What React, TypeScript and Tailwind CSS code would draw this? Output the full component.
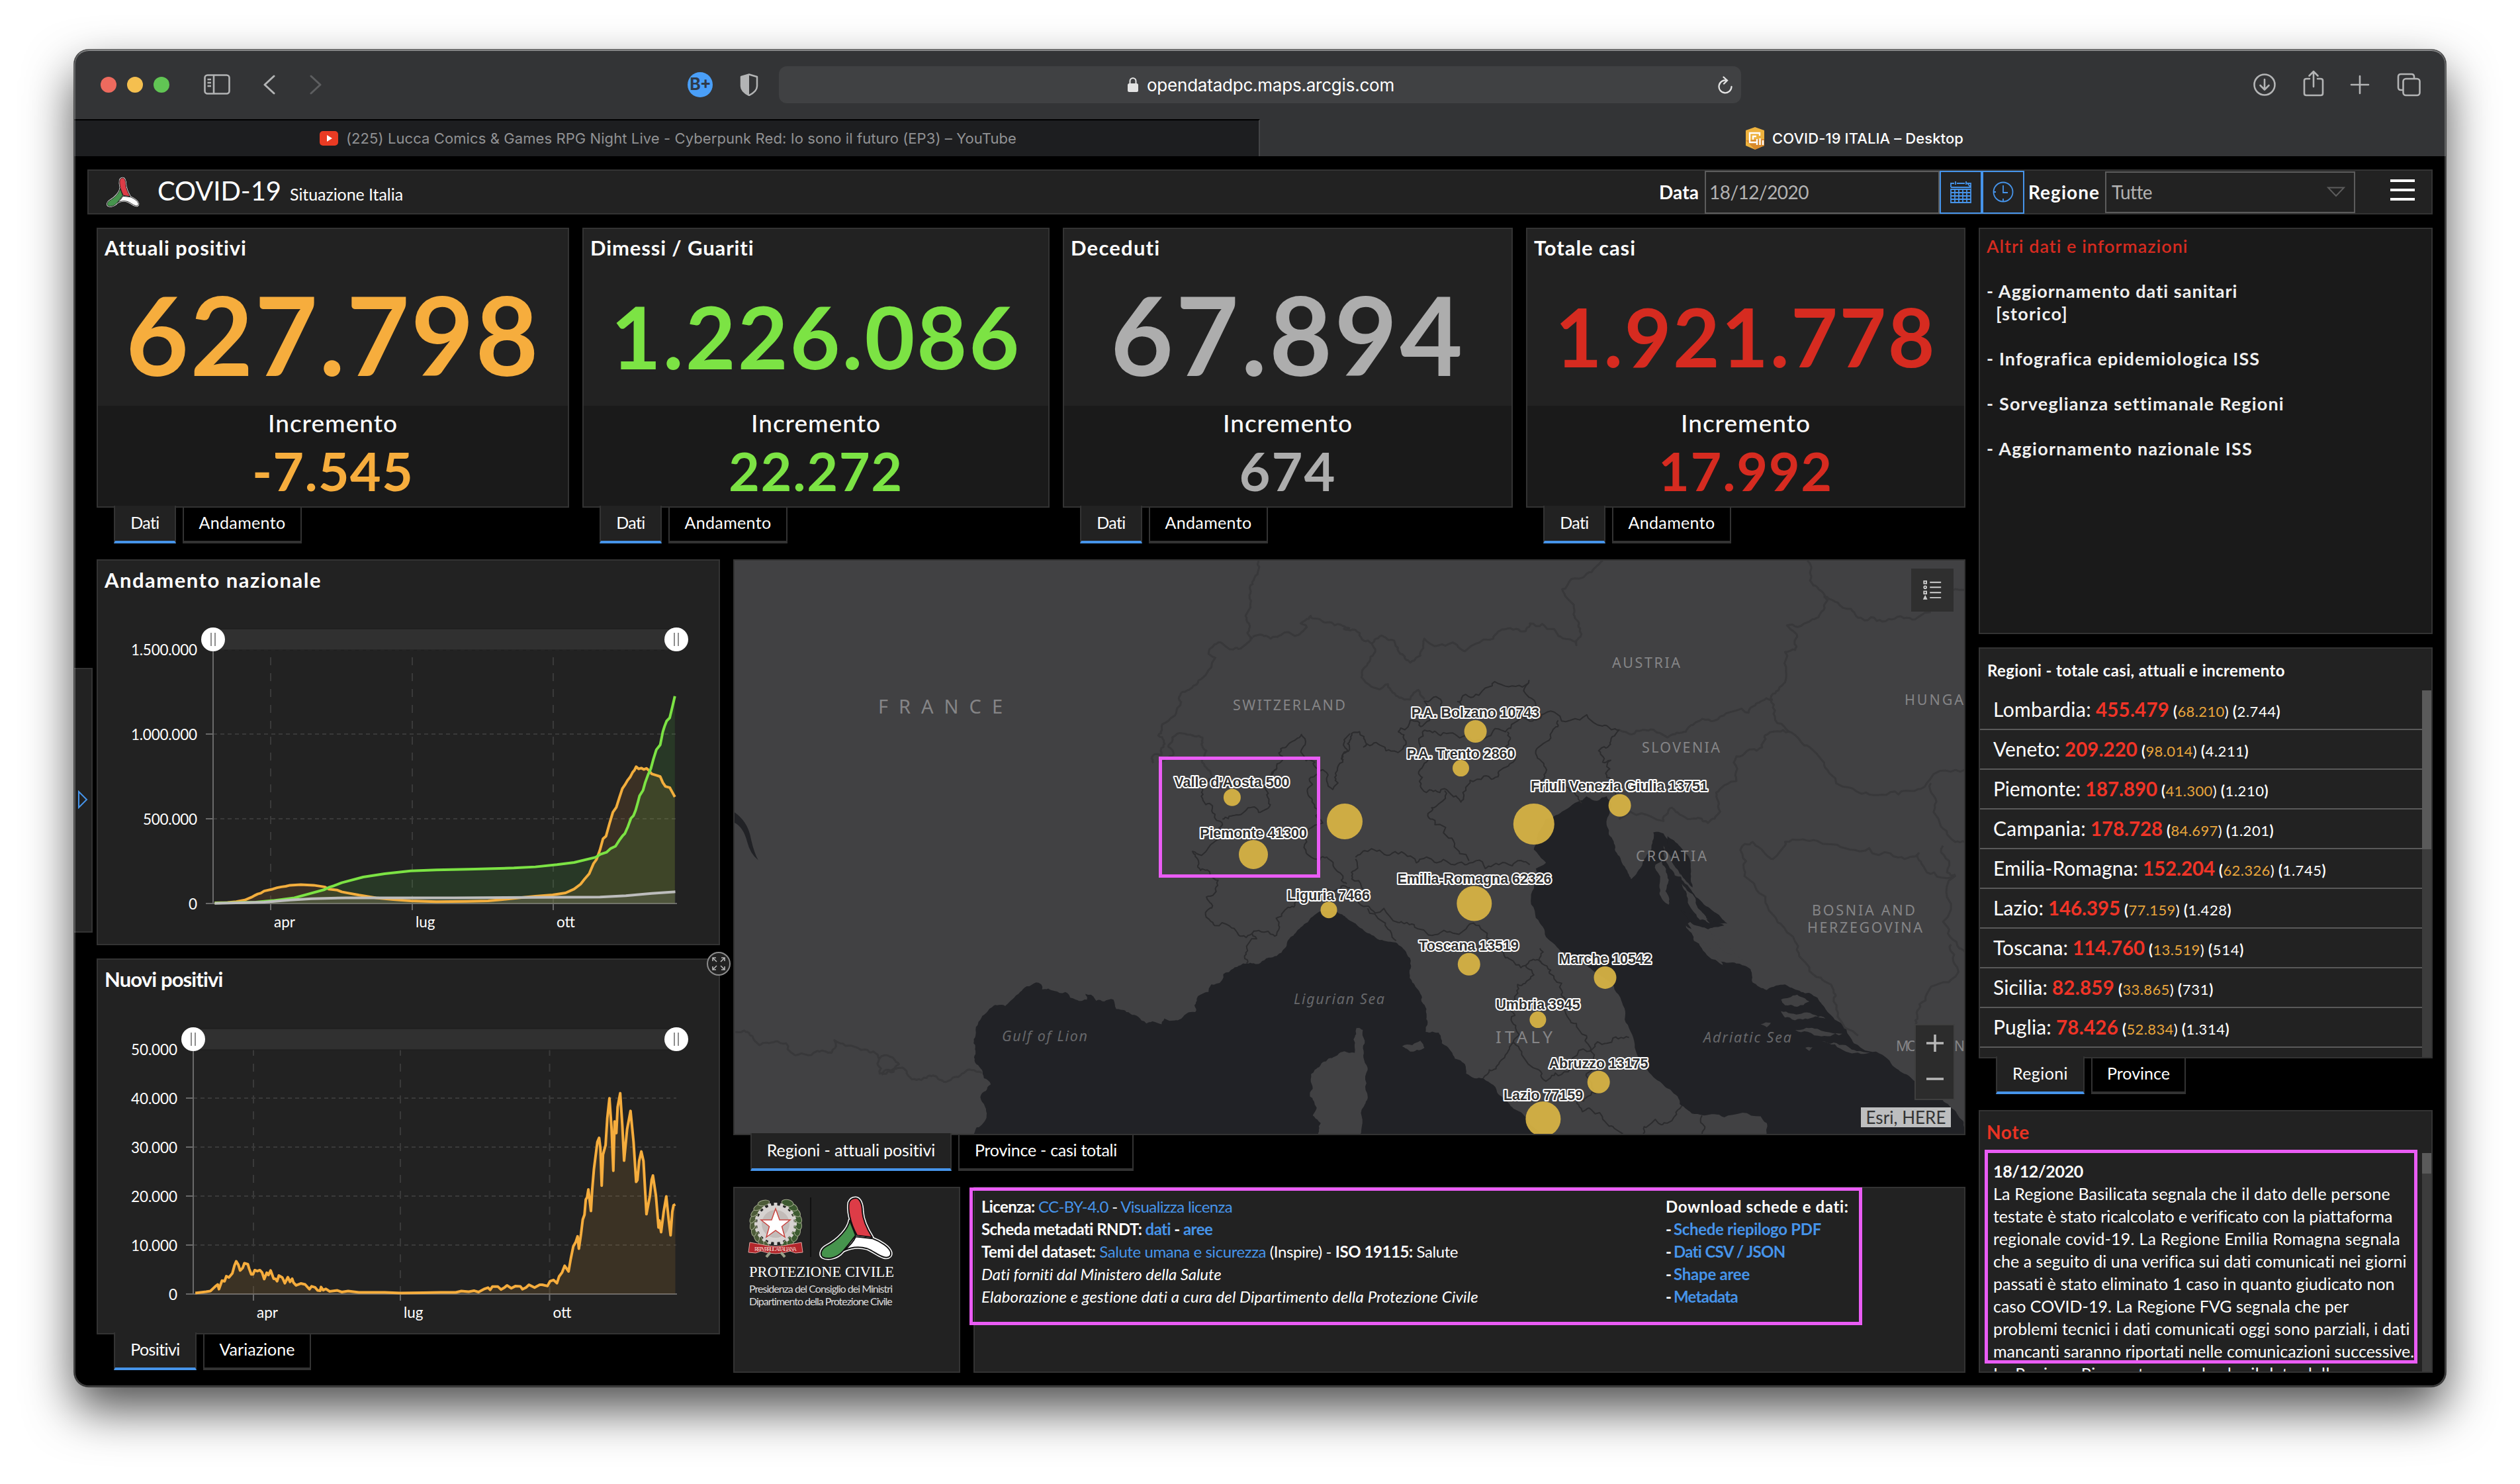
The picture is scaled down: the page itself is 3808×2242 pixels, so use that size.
import { useLayoutEffect, useRef, useState } from "react";
import type { ReactNode } from "react";

/* ---------- text that is tracked to fill a given width ---------- */
function Fit({ w, className = "", children }: { w: number; className?: string; children: ReactNode }) {
  const ref = useRef<HTMLSpanElement>(null);
  const [spacing, setSpacing] = useState(0);
  useLayoutEffect(() => {
    const el = ref.current;
    if (!el) return;
    el.style.letterSpacing = "0px";
    const natural = el.getBoundingClientRect().width;
    const count = Math.max(1, (el.textContent || "").length);
    const next = (w - natural) / count;
    el.style.letterSpacing = next + "px";
    setSpacing(next);
  }, [w]);
  return (
    <span ref={ref} className={"inline-block whitespace-pre " + className} style={{ letterSpacing: spacing }}>
      {children}
    </span>
  );
}

/* ---------- bottom tabs ---------- */
function Tabs({ items }: { items: { label: string; text: number; box: string }[] }) {
  return (
    <div className="relative z-10 -mt-[3px] ml-[26px] flex h-[57px] gap-[10px]">
      {items.map((t, i) => (
        <div
          key={t.label}
          className={
            "flex justify-center border-x-2 border-[#333] text-[25px] leading-[34px] " +
            t.box +
            (i === 0 ? " border-b-4 border-b-[#4694ea] bg-[#222] pt-[8px]" : " mt-[3px] border-b-4 bg-black pt-[5px]")
          }
        >
          <Fit w={t.text}>{t.label}</Fit>
        </div>
      ))}
    </div>
  );
}

/* ---------- logos ---------- */
function CivilProtection({ className }: { className: string }) {
  const red = "M55 3C61 3 65 12 65 24C66 38 72 50 80 63L57 60C46 40 43 20 45 10C47 5 51 3 55 3Z";
  const green = "M46 37C44 50 30 66 10 77C2 82 1 90 5 93C12 97 24 95 32 88C42 78 50 66 55 60Z";
  const white = "M55 62L81 65C92 69 106 78 108 86C109 93 103 95 97 93C88 90 82 84 72 80C62 77 50 77 37 83C46 76 52 69 55 62Z";
  return (
    <svg viewBox="-2 -1 114 99" className={className} preserveAspectRatio="none">
      <g stroke="#fff" strokeWidth="5" fill="#fff" strokeLinejoin="round">
        <path d={red} /><path d={green} /><path d={white} />
      </g>
      <g stroke="#111" strokeWidth="2" strokeLinejoin="round">
        <path d={white} fill="#fff" /><path d={green} fill="#46944d" /><path d={red} fill="#dd3c47" />
      </g>
    </svg>
  );
}

function Emblem() {
  const teeth = Array.from({ length: 20 }, (_, i) => i * 18);
  const leaves = Array.from({ length: 9 }, (_, i) => i);
  return (
    <svg viewBox="0 0 84 94" className="h-[94px] w-[84px]">
      {leaves.map((i) => {
        const a = ((118 + i * 15) * Math.PI) / 180;
        const x = 42 + Math.cos(a) * 34;
        const y = 42 + Math.sin(a) * 36;
        const deg = 118 + i * 15 + 90;
        return (
          <g key={i} stroke="#a3ab8e" strokeWidth="1">
            <ellipse cx={x} cy={y} rx="9" ry="4" fill="#4c5b38" transform={`rotate(${deg + 20} ${x} ${y})`} />
            <ellipse cx={84 - x} cy={y} rx="9" ry="5" fill="#3c5a30" transform={`rotate(${-deg - 20} ${84 - x} ${y})`} />
          </g>
        );
      })}
      <g fill="#d6d2d0">
        {teeth.map((t) => (
          <rect key={t} x="39.5" y="11" width="5" height="8" transform={`rotate(${t} 42 43)`} />
        ))}
        <circle cx="42" cy="43" r="28" />
      </g>
      <circle cx="42" cy="43" r="21" fill="#c2bbb8" />
      <path d="M42 20L48 37L64 37L51.500 47L56 63L42 53L28 63L32.500 47L20 37L36 37Z" fill="#fff" stroke="#c8443f" strokeWidth="1.500" />
      <path d="M3 71L20 74Q42 80 64 74L81 71L83 86L72 87L64 84Q42 92 20 84L12 87L1 86Z" fill="#b3262b" stroke="#e4a6a2" strokeWidth="1" />
      <path d="M34 86L28 93M50 86L56 93" stroke="#9aa08a" strokeWidth="4" />
      <text x="42" y="83.500" fontSize="8.500" fill="#f3d9d4" textAnchor="middle" textLength="64" className="font-[Liberation_Serif]">REPVBBLICA ITALIANA</text>
    </svg>
  );
}

/* ---------- browser chrome ---------- */
function TitleBar() {
  return (
    <div className="flex h-[105px] w-full shrink-0 items-center bg-[#333436] text-[#b3b4b5]">
      <div className="ml-[40px] flex gap-[16px]">
        <div className="size-[24px] rounded-full bg-[#ed6a5e]" />
        <div className="size-[24px] rounded-full bg-[#f5bf4f]" />
        <div className="size-[24px] rounded-full bg-[#61c554]" />
      </div>
      <svg viewBox="0 0 40 32" className="ml-[52px] h-[32px] w-[40px]" fill="none" stroke="currentColor" strokeWidth="2.600">
        <rect x="1.500" y="1.500" width="37" height="28" rx="4" />
        <path d="M15 2V30M5.500 8H11M5.500 13H11M5.500 18H11" />
      </svg>
      <svg viewBox="0 0 18 30" className="ml-[50px] h-[30px] w-[18px]" fill="none" stroke="currentColor" strokeWidth="3" strokeLinecap="round" strokeLinejoin="round">
        <path d="M16 2L2 15L16 28" />
      </svg>
      <svg viewBox="0 0 18 30" className="ml-[52px] h-[30px] w-[18px] text-[#5d5e60]" fill="none" stroke="currentColor" strokeWidth="3" strokeLinecap="round" strokeLinejoin="round">
        <path d="M2 2L16 15L2 28" />
      </svg>
      <div className="ml-[553px] flex size-[38px] items-center justify-center rounded-full bg-[#4a9ff8] font-[Inter] text-[25px] font-bold leading-none tracking-[-1px] text-[#2f3a48]">B<span className="-mt-[4px]">+</span></div>
      <svg viewBox="0 0 28 34" className="ml-[41px] h-[34px] w-[28px]">
        <path d="M14 1.500L26 5V19C26 26 20 30 14 33C8 30 2 26 2 19V5Z" fill="none" stroke="currentColor" strokeWidth="2.500" strokeLinejoin="round" />
        <path d="M14 1.500V33C8 30 2 26 2 19V5Z" fill="currentColor" />
      </svg>
      <div className="ml-[31px] flex h-[56px] w-[1454px] items-center rounded-[12px] bg-[#404143] font-[Inter] text-[26px] text-white">
        <svg viewBox="0 0 18 24" className="ml-[526px] h-[24px] w-[18px]">
          <rect x="1" y="10" width="16" height="13" rx="2.500" fill="#e3e3e3" />
          <path d="M4.500 11V6.500A4.500 4.500 0 0 1 13.500 6.500V11" fill="none" stroke="#e3e3e3" strokeWidth="2" />
        </svg>
        <div className="ml-[12px] mt-[2px] w-[862px]"><Fit w={374}>opendatadpc.maps.arcgis.com</Fit></div>
        <svg viewBox="0 0 24 28" className="mt-[2px] h-[28px] w-[24px]" fill="none" stroke="#e3e3e3" strokeWidth="2.300" strokeLinecap="round">
          <path d="M14 6.500A9.500 9.500 0 1 0 21.500 16M9.500 1.500L15 6.500L10 11.500" />
        </svg>
      </div>
      <svg viewBox="0 0 36 36" className="ml-[773px] size-[36px]" fill="none" stroke="currentColor" strokeWidth="2.600" strokeLinecap="round" strokeLinejoin="round">
        <circle cx="18" cy="18" r="15.500" />
        <path d="M18 10V25M11.500 19L18 25.500L24.500 19" />
      </svg>
      <svg viewBox="0 0 32 40" className="-mt-[4px] ml-[40px] h-[40px] w-[32px]" fill="none" stroke="currentColor" strokeWidth="2.600" strokeLinecap="round" strokeLinejoin="round">
        <path d="M10 13H5Q2 13 2 16V35Q2 38 5 38H27Q30 38 30 35V16Q30 13 27 13H22M16 25V3M9.500 8.500L16 2L22.500 8.500" />
      </svg>
      <svg viewBox="0 0 30 30" className="ml-[39px] size-[30px]" fill="none" stroke="currentColor" strokeWidth="2.600" strokeLinecap="round">
        <path d="M15 2V28M2 15H28" />
      </svg>
      <svg viewBox="0 0 36 36" className="ml-[41px] size-[36px]" fill="none" stroke="currentColor" strokeWidth="2.600">
        <rect x="9.500" y="9" width="25" height="25" rx="4" />
        <path d="M9 26H6Q2 26 2 22V6Q2 2 6 2H22Q26 2 26 6V8.500" />
      </svg>
    </div>
  );
}

function TabBar() {
  return (
    <div className="flex h-[56px] w-full shrink-0 bg-[#333436] font-[Inter] text-[22px] leading-[56px]">
      <div className="flex w-[1792px] items-center border-r-2 border-t-2 border-r-[#434446] border-t-black bg-[#1d1e20] text-[#919294]">
        <svg viewBox="0 0 28 22" className="ml-[371px] h-[22px] w-[28px]">
          <rect width="28" height="22" rx="5" fill="#ea3b23" />
          <path d="M11 6L19 11L11 16Z" fill="#fff" />
        </svg>
        <Fit w={1013} className="ml-[12px]">(225) Lucca Comics &amp; Games RPG Night Live - Cyberpunk Red: Io sono il futuro (EP3) – YouTube</Fit>
      </div>
      <div className="flex items-center pt-[2px] font-medium text-white">
        <svg viewBox="0 0 30 34" className="ml-[733px] h-[34px] w-[30px]">
          <path d="M15 0L29 5V28L15 34L1 28V5Z" fill="#eeb23e" />
          <path d="M1 20L15 34L29 28V18Z" fill="#d98a2c" />
          <path d="M18 23H7V9H22V13M12 19V14H17M18 27V18M22.500 27V17M27 27V20" fill="none" stroke="#fff" strokeWidth="2.400" />
        </svg>
        <Fit w={289} className="ml-[11px]">COVID-19 ITALIA – Desktop</Fit>
      </div>
    </div>
  );
}

function Header() {
  return (
    <div className="flex h-[68px] w-[3544px] items-center border-2 border-[#333] bg-[#222]">
      <CivilProtection className="ml-[26px] h-[46px] w-[51px]" />
      <div className="ml-[27px] flex items-baseline leading-[60px]">
        <Fit w={187} className="text-[40px]">COVID-19</Fit>
        <Fit w={171} className="ml-[13px] text-[25px]">Situazione Italia</Fit>
      </div>
      <Fit w={60} className="ml-[1898px] text-[28px] font-bold">Data</Fit>
      <div className="ml-[9px] flex h-[65px] w-[355px] items-center border-2 border-[#5c5c5c] text-[28px] text-[#b2b2b2]">
        <Fit w={150} className="ml-[5px]">18/12/2020</Fit>
      </div>
      <div className="flex h-[65px] w-[64px] items-center justify-center border-2 border-[#4694ea]">
        <svg viewBox="0 0 34 34" className="size-[34px]" fill="none" stroke="#4694ea" strokeWidth="1.800">
          <path d="M2 10V4H7M11 4H23M27 4H32V10ZM9 1V6M25 1V6M2 10H32M2 13H32V33H2ZM2 18H32M2 23H32M2 28H32M8 13V33M14 13V33M20 13V33M26 13V33" />
        </svg>
      </div>
      <div className="flex h-[65px] w-[64px] items-center justify-center border-2 border-[#4694ea]">
        <svg viewBox="0 0 32 32" className="size-[32px]" fill="none" stroke="#4694ea" strokeWidth="1.800">
          <circle cx="16" cy="16" r="14.500" />
          <path d="M16 6V17H23M16 26V30M2 16H5" />
        </svg>
      </div>
      <Fit w={108} className="ml-[6px] text-[28px] font-bold">Regione</Fit>
      <div className="ml-[8px] flex h-[63px] w-[378px] items-center border-2 border-[#5c5c5c] text-[28px] text-[#b2b2b2]">
        <Fit w={60} className="ml-[8px]">Tutte</Fit>
        <svg viewBox="0 0 28 16" className="ml-[264px] h-[16px] w-[28px]" fill="none" stroke="#5c5c5c" strokeWidth="2">
          <path d="M2 1.500H26L14 14Z" />
        </svg>
      </div>
      <div className="-mt-[6px] ml-[53px] flex w-[37px] flex-col gap-[10px]">
        <div className="h-[4px] bg-white" />
        <div className="h-[4px] bg-white" />
        <div className="h-[4px] bg-white" />
      </div>
    </div>
  );
}

/* ---------- KPI cards ---------- */
type Kpi = { title: string; tw: number; value: string; vw: number; size: string; inc: string; iw: number; color: string; box: string };
const kpis: Kpi[] = [
  { title: "Attuali positivi", tw: 214, value: "627.798", vw: 626, size: "text-[164px] mt-[11px]", inc: "-7.545", iw: 244, color: "text-[#f6ad3d]", box: "w-[714px]" },
  { title: "Dimessi / Guariti", tw: 248, value: "1.226.086", vw: 620, size: "text-[131px] mt-[14px]", inc: "22.272", iw: 264, color: "text-[#7ce344]", box: "w-[706px]" },
  { title: "Deceduti", tw: 136, value: "67.894", vw: 536, size: "text-[164px] mt-[11px]", inc: "674", iw: 147, color: "text-[#adadad]", box: "w-[680px]" },
  { title: "Totale casi", tw: 154, value: "1.921.778", vw: 576, size: "text-[122px] mt-[14px]", inc: "17.992", iw: 264, color: "text-[#d62b20]", box: "w-[664px]" },
];

function KpiCard({ k }: { k: Kpi }) {
  return (
    <div className={k.box}>
      <div className="flex h-[423px] flex-col border-2 border-[#333] bg-[#222]">
        <div className="h-[267px] pt-[8px]">
          <div className="pl-[10px] text-[31px] font-bold leading-[40px]"><Fit w={k.tw}>{k.title}</Fit></div>
          <div className={"text-center font-bold leading-[200px] " + k.size + " " + k.color}><Fit w={k.vw}>{k.value}</Fit></div>
        </div>
        <div className="grow bg-[#1a1a1a] pt-[1px] text-center">
          <div className="text-[37px] font-medium leading-[50px]"><Fit w={196}>Incremento</Fit></div>
          <div className={"mt-[2px] text-[81px] font-bold leading-[90px] " + k.color}><Fit w={k.iw}>{k.inc}</Fit></div>
        </div>
      </div>
      <Tabs items={[{ label: "Dati", text: 44, box: "w-[94px]" }, { label: "Andamento", text: 131, box: "w-[180px]" }]} />
    </div>
  );
}

/* ---------- charts ---------- */
type Axis = { y: number; label: string };
type Series = { d: string; base: string; color: string; fill: string };
function Chart(p: { title: string; tw: number; top: number; h: number; x0: number; x1: number; slider: number; axis: Axis[]; months: { x: number; label: string }[]; transform: string; series: Series[] }) {
  const zero = p.axis[p.axis.length - 1].y;
  const top = p.axis[0].y;
  return (
    <div className="relative w-full border-2 border-[#333] bg-[#222]">
      <svg viewBox={`148 ${p.top + 2} 938 ${p.h - 4}`} className="block w-full" fill="none">
        <g stroke="#3a3a3a" strokeWidth="2">
          {p.axis.slice(0, -1).map((a) => <path key={a.y} d={`M${p.x0} ${a.y}H${p.x1}`} strokeDasharray="6 5" />)}
          {p.months.map((m) => <path key={m.x} d={`M${m.x} ${zero}V${top}`} strokeDasharray="12 12" />)}
        </g>
        <rect x={p.x0} y={p.slider - 16} width={p.x1 - p.x0} height="32" fill="#303030" stroke="#1b1b1b" strokeWidth="1" />
        <g stroke="#6a6a6a" strokeWidth="2">
          {p.axis.slice(1).map((a) => <path key={a.y} d={`M${p.x0 - 11} ${a.y}H${p.x0}`} />)}
          {p.months.map((m) => <path key={m.x} d={`M${m.x} ${zero}V${zero + 10}`} />)}
          <path d={`M${p.x0} ${top}V${zero}H${p.x1 + 1}`} />
        </g>
        <g transform={p.transform} strokeLinejoin="round">
          {p.series.map((s) => <path key={s.color + "f"} d={s.d + s.base} fill={s.fill} />)}
          {p.series.map((s) => <path key={s.color} d={s.d} stroke={s.color} strokeWidth="4" vectorEffect="non-scaling-stroke" />)}
        </g>
        {[p.x0, p.x1].map((x) => (
          <g key={x}>
            <circle cx={x} cy={p.slider} r="18" fill="#fff" />
            <path d={`M${x - 3} ${p.slider - 10}V${p.slider + 10}M${x + 3} ${p.slider - 10}V${p.slider + 10}`} stroke="#8d8d8d" strokeWidth="2" />
          </g>
        ))}
        <g fill="#fff" fontSize="22.500" className="font-[Lato]">
          {p.axis.map((a) => (
            <text key={a.y} x={p.x0 - 24} y={a.y + 8.500} textAnchor="end" textLength={a.label.length === 1 ? undefined : a.label.length === 6 ? 70 : a.label.length === 7 ? 82 : 100}>{a.label}</text>
          ))}
          {p.months.map((m) => <text key={m.x} x={m.x + 5} y={zero + 36}>{m.label}</text>)}
        </g>
      </svg>
      <div className="absolute left-[10px] top-[9px] text-[31px] font-bold leading-[40px]"><Fit w={p.tw}>{p.title}</Fit></div>
    </div>
  );
}

const orange1 = "M345 1288L375 1287L395 1284L415 1278L430 1268L437 1262L445 1256L452 1253L460 1245L480 1238L490 1233L500 1230L510 1228L520 1224L545 1222L575 1224L600 1230L610 1238L630 1242L640 1248L650 1251L680 1260L720 1270L760 1276L800 1281L860 1284L930 1283L980 1281L1010 1277L1050 1270L1090 1264L1130 1259L1160 1252L1180 1238L1195 1220L1204 1202L1215 1182L1225 1145L1232 1130L1240 1095L1247 1055L1254 1045L1262 1000L1270 958L1278 940L1285 905L1292 872L1298 858L1304 842L1310 830L1316 812L1320 805L1324 792L1330 800L1336 797L1342 802L1348 798L1354 806L1360 818L1370 823L1380 828L1386 850L1392 864L1402 868L1408 885L1414 902";
const green1 = "M345 1289L440 1286L480 1280L530 1270L560 1257L600 1240L610 1232L622 1226L640 1215L690 1194L740 1182L800 1172L860 1168L950 1165L1040 1161L1090 1157L1140 1149L1180 1141L1230 1122L1240 1112L1255 1104L1265 1090L1276 1082L1285 1060L1292 1045L1298 1035L1305 1010L1312 980L1318 970L1323 950L1328 922L1332 898L1340 878L1345 850L1352 820L1358 800L1364 765L1371 730L1380 712L1386 665L1390 645L1395 625L1402 614L1408 575L1414 535";
const gray1 = "M345 1290L460 1286L520 1278L570 1273L650 1270L900 1270L1240 1267L1300 1262L1360 1254L1415 1248";
const orange2 = "M300 1157L325 1153L335 1151L345 1138L352 1130L355 1145L362 1118L368 1120L372 1104L378 1108L386 1095L391 1070L395 1057L400 1068L404 1086L410 1078L414 1063L422 1066L425 1080L430 1098L434 1098L438 1085L444 1088L450 1085L455 1092L460 1113L466 1093L470 1100L475 1086L482 1112L486 1112L490 1120L494 1102L502 1108L508 1126L515 1107L520 1122L525 1112L528 1124L534 1133L545 1127L555 1130L565 1145L570 1136L578 1139L584 1149L590 1150L592 1138L597 1148L603 1144L612 1152L630 1149L640 1154L655 1151L680 1155L700 1155L740 1155L776 1157L830 1156L870 1155L905 1155L918 1151L935 1153L948 1150L958 1154L970 1145L980 1140L985 1147L990 1137L1003 1137L1010 1146L1018 1140L1024 1133L1034 1142L1044 1135L1055 1136L1060 1145L1068 1140L1075 1131L1088 1140L1100 1131L1106 1131L1118 1135L1124 1120L1132 1116L1140 1126L1145 1105L1152 1092L1158 1071L1167 1089L1172 1050L1178 1010L1184 995L1188 978L1191 1017L1196 970L1200 925L1204 910L1207 862L1210 855L1213 830L1219 898L1222 830L1226 765L1234 680L1238 667L1241 700L1244 818L1247 720L1253 690L1257 605L1262 542L1267 640L1271 771L1274 615L1278 652L1281 570L1287 526L1292 630L1296 739L1303 640L1311 582L1318 680L1324 806L1327 800L1331 740L1336 710L1341 740L1348 908L1356 850L1360 800L1363 786L1370 850L1376 950L1378 928L1382 965L1388 900L1394 852L1400 930L1404 975L1408 900L1411 880L1415 877";

/* ---------- map ---------- */
function rough(src: string, amp: number, closed = false) {
  const nums = src.trim().split(/[\s,]+/).map(Number);
  let pts: number[][] = [];
  for (let i = 0; i < nums.length; i += 2) pts.push([nums[i], nums[i + 1]]);
  if (closed) pts.push(pts[0]);
  let seed = Math.abs(Math.round(nums[0] * 31 + nums[1] * 17)) + 7;
  const rnd = () => {
    seed = (seed * 16807) % 2147483647;
    return seed / 2147483647 - 0.5;
  };
  for (let pass = 0; pass < 3; pass++) {
    const out: number[][] = [pts[0]];
    for (let i = 1; i < pts.length; i++) {
      const [ax, ay] = pts[i - 1];
      const [bx, by] = pts[i];
      const len = Math.hypot(bx - ax, by - ay);
      if (len > 8 && len < 160) out.push([(ax + bx) / 2 - ((by - ay) / len) * rnd() * len * amp, (ay + by) / 2 + ((bx - ax) / len) * rnd() * len * amp]);
      out.push([bx, by]);
    }
    pts = out;
  }
  return "M" + pts.map((p) => p[0].toFixed(1) + " " + p[1].toFixed(1)).join("L") + (closed ? "Z" : "");
}

const seaWest = "622 1545 655 1508 662 1485 655 1460 648 1435 660 1425 672 1408 655 1392 650 1370 636 1355 634 1320 634 1280 640 1250 655 1225 675 1205 692 1199 708 1202 725 1185 745 1165 762 1150 785 1140 798 1145 800 1158 830 1162 858 1165 870 1180 900 1188 912 1185 908 1170 922 1172 935 1188 955 1190 978 1185 985 1210 1010 1218 1030 1225 1048 1240 1060 1248 1075 1242 1098 1250 1105 1235 1130 1240 1160 1222 1182 1218 1180 1200 1195 1172 1215 1165 1222 1145 1248 1135 1252 1118 1280 1100 1310 1090 1345 1088 1385 1070 1405 1050 1420 1020 1445 995 1470 970 1500 952 1530 952 1556 966 1556 1320 1530 1335 1500 1350 1480 1370 1470 1395 1475 1420 1468 1440 1485 1470 1475 1490 1495 1510 1490 1545";
const seaTyrrhenian = "0 965 30 985 60 1010 100 1030 130 1035 155 1060 165 1090 170 1140 190 1170 205 1210 208 1245 203 1270 235 1272 243 1300 265 1320 275 1340 300 1355 303 1380 345 1392 375 1415 395 1445 425 1475 450 1495 480 1530 485 1545 40 1545 45 1475 60 1440 60 1370 50 1320 48 1265 32 1260 25 1290 28 1325 0 1320";
const seaAdriatic = "590 660 600 650 625 662 650 650 662 672 655 700 650 712 655 750 670 790 690 830 710 868 725 850 740 820 760 790 765 745 790 748 805 765 812 800 830 830 835 870 870 925 885 970 850 985 880 1030 930 1085 970 1090 1005 1105 1010 1140 1045 1160 1090 1145 1130 1165 1170 1180 1190 1210 1240 1260 1260 1300 1330 1330 1370 1370 1410 1400 1470 1440 1500 1470 1530 1505 1540 1545 1045 1545 1045 1510 1030 1492 940 1495 890 1490 860 1485 830 1460 825 1440 790 1410 750 1370 725 1330 705 1260 690 1200 665 1145 640 1125 600 1095 540 1060 500 1020 475 970 466 900 475 840 500 825 470 790 480 750 500 710 540 690";
const inlets = ["800 755 825 775 855 815 858 860 862 890 830 850 812 810", "835 870 870 915 910 950 948 985 920 985 880 955 850 915", "830 950 860 960 905 975 940 990 900 1000 860 985"];
const islands9 = [
  "770 830 785 820 800 860 795 900 803 935 790 925 780 890",
  "790 780 815 830 835 862 818 858 798 825",
  "835 880 870 925 890 960 905 985 880 975 850 930",
  "845 990 880 1020 925 1080 940 1100 905 1075 865 1030",
  "900 1000 950 1040 1000 1090 985 1095 930 1050",
  "1080 1185 1120 1172 1150 1190 1120 1204 1090 1200",
  "1080 1215 1130 1222 1190 1235 1140 1235 1090 1232",
  "1115 1265 1170 1262 1240 1275 1180 1282",
  "1180 1295 1240 1305 1300 1325 1240 1322",
  "1030 1250 1055 1246 1045 1258",
  "1140 1312 1158 1310 1150 1320",
  "145 1308 170 1305 190 1293 200 1312 165 1322",
];
const countries8 = [
  "1340 30 1338 60 1318 100 1320 140 1310 180 1312 220 1325 235",
  "1325 230 1370 235 1400 222 1440 225 1460 205 1445 195 1470 175 1500 190 1530 200 1568 208",
  "1320 232 1290 262 1250 248 1230 250 1215 275 1232 285 1190 345 1150 375 1145 410 1100 460 1090 490 1103 520 1098 540 1075 545 1078 562",
  "1090 560 1110 550 1128 540 1115 520 1125 495 1165 488 1200 495 1210 530 1205 570 1225 600",
  "35 1270 65 1270 95 1305 135 1295 175 1325 240 1320 275 1325 282 1292 340 1312 390 1330 395 1380 440 1365 475 1395 520 1385 560 1402 600 1380 650 1378",
  "395 1340 420 1335 443 1355 430 1375 400 1382",
];
const regions8 = [
  "1225 600 1205 615 1200 655 1225 675 1230 705 1250 725 1260 760 1215 785 1175 795 1190 820 1195 845 1225 860 1238 885 1210 915 1212 950 1230 990 1290 1015 1328 1005 1335 1025 1305 1070 1310 1090",
  "1250 710 1280 700 1310 685 1340 692 1365 680 1362 650 1365 615 1385 580",
  "1365 600 1385 570 1400 545 1395 525 1425 505 1447 487 1450 540 1480 560 1500 580 1510 610 1525 632 1538 615 1530 600 1550 560 1562 530 1568 485",
  "1500 580 1470 600 1462 640 1480 680 1500 720 1460 770 1480 815 1510 810 1540 850 1560 880",
  "1328 1005 1380 1018 1390 990 1405 950 1440 925 1480 915 1530 900 1568 890",
];
const countries9 = [
  "640 30 600 65 540 105 570 160 580 200 585 230 575 252 545 235 520 210 460 195 450 215 400 210 370 235 300 268 270 245 200 235 190 280 165 298 140 275 125 240 100 230 70 248 40 220 0 208",
  "70 248 75 275 60 300 55 350 110 355 130 385 165 395 185 370 200 395",
  "680 475 740 475 800 495 845 480 870 455 930 440 1000 430 1030 400 1060 395",
  "1145 30 1155 70 1180 110 1185 160 1150 190 1095 200 1120 230 1115 265 1090 270 1090 350 1060 380 1065 440 1100 480",
  "1185 125 1220 140 1270 180 1330 190 1390 180 1450 165",
  "1500 110 1534 105",
  "1100 480 1040 490 1020 530 970 545 970 610 920 640 930 690 900 720 850 710 810 680 790 715 680 710",
  "1100 480 1150 520 1200 590 1290 640 1370 645 1440 615 1534 580",
  "985 780 1010 770 1040 800 1060 815 1090 770 1160 765 1250 790 1350 800 1420 800 1440 850 1510 855",
  "985 780 990 860 1050 950 1110 1020 1150 1100 1210 1160 1210 1190 1270 1280",
  "1450 615 1460 680 1490 750 1534 770",
  "1480 780 1490 850 1510 860 1480 980 1520 1050 1534 1060",
  "1500 1040 1515 1100 1440 1170 1415 1220 1415 1260",
];
const regions9 = [
  "135 480 165 450 195 465 200 400 240 395 250 430 290 420 295 385 350 365 400 360 458 345 450 380 475 410 490 435 560 450 640 465 680 475 660 505 630 530 640 560 660 555 650 600 672 645",
  "0 555 15 520 20 485 40 480 50 520 90 515 105 530 135 535 150 500 135 480",
  "195 480 240 490 300 490 345 500 400 480 445 440 490 435",
  "405 480 400 520 420 540 410 565 375 600 330 605 295 640 290 665 250 630 205 640 195 600 205 560 190 520 195 480",
  "530 450 515 480 475 530 495 570 485 610 540 630 570 640 588 668",
  "250 635 218 680 220 710 260 760 310 820",
  "30 810 60 795 120 800 180 825 230 825 300 830 350 840 400 825 460 830",
  "30 815 20 850 45 890 50 940 100 945 150 985 210 1015 270 1010 335 990 380 1030 400 1075 450 1095 490 1090 485 1050",
  "60 945 110 1000 130 1030",
  "450 1095 470 1120 430 1145 415 1200 420 1250 410 1310 385 1350 360 1370 345 1392",
  "490 1090 520 1130 545 1180 560 1240 600 1280 610 1320",
  "415 1300 440 1330 490 1380 500 1400 555 1375 610 1320",
  "610 1320 650 1300 705 1285",
  "610 1320 600 1380 630 1430 580 1450 590 1480 640 1500 690 1538",
  "835 1465 800 1510 770 1500 740 1538",
  "885 1490 885 1538",
];
const bubbles = [
  [1861.900, 1204.800, 13], [1894, 1291, 22], [2032, 1241, 27], [2008, 1374.700, 12.500],
  [2229.600, 1105, 17], [2207.500, 1160.600, 12.500], [2447.600, 1216.800, 17], [2317.800, 1245, 31],
  [2227.800, 1365, 26.500], [2219.800, 1456.800, 17], [2425.500, 1476.900, 17], [2323.900, 1540.600, 12.500],
  [2415.700, 1634.700, 17], [2331.900, 1690.400, 26.500],
];
const pins: [string, number, number][] = [
  ["Valle d'Aosta 500", 1861.500, 1189], ["Piemonte 41300", 1894, 1265.500], ["Liguria 7466", 2007.500, 1360],
  ["P.A. Bolzano 10743", 2229.500, 1083.500], ["P.A. Trento 2860", 2207.500, 1145.500], ["Friuli Venezia Giulia 13751", 2447, 1195],
  ["Emilia-Romagna 62326", 2228, 1335], ["Toscana 13519", 2219.500, 1435.500], ["Marche 10542", 2425.500, 1455.500],
  ["Umbria 3945", 2324, 1525], ["Abruzzo 13175", 2415.500, 1613.500], ["Lazio 77159", 2332, 1662],
];
const places: [string, number, number, number, number][] = [
  ["FRANCE", 1327, 1515, 1078, 29], ["SWITZERLAND", 1863, 2033, 1073, 21.500], ["AUSTRIA", 2436, 2539, 1009, 21.500],
  ["SLOVENIA", 2481, 2599, 1137, 21.500], ["CROATIA", 2472, 2579, 1301, 21.500], ["HUNGA", 2878, 2967, 1065, 21.500],
  ["BOSNIA AND", 2738, 2894, 1382.500, 21.500], ["HERZEGOVINA", 2731, 2905, 1409, 21.500], ["ITALY", 2260, 2346, 1576, 26], ["MO", 2865, 2898, 1588, 21.500], ["N", 2953, 2968, 1588, 21],
];
const seas: [string, number, number, number][] = [
  ["Gulf of Lion", 1514, 1643, 1573], ["Ligurian Sea", 1955, 2092, 1517], ["Adriatic Sea", 2574, 2707, 1575],
];

function ItalyMap() {
  return (
    <div className="relative h-[870px] w-full overflow-hidden border-2 border-[#333] bg-[#414143]">
      <svg viewBox="1110 847 1858 866" className="block h-full w-full" fill="none" strokeLinejoin="round">
        <g transform="translate(1090 830) scale(0.60588 0.57398)">
          <path d={rough(seaWest, 0.35, true)} fill="#212226" />
          <path d="M30 690Q62 712 72 752Q80 795 92 818Q72 802 64 768Q54 728 30 718Z" fill="#212226" />
        </g>
        <g transform="translate(2030 830) scale(0.61226 0.57398)">
          <path d={rough(seaTyrrhenian, 0.3, true)} fill="#212226" />
          <path d={rough(seaAdriatic, 0.25, true)} fill="#212226" />
          {inlets.map((d) => <path key={d} d={rough(d, 0.2, true)} fill="#212226" />)}
          {islands9.map((d) => <path key={d} d={rough(d, 0.3, true)} fill="#414143" />)}
        </g>
        <g transform="translate(1090 830) scale(0.60588 0.57398)">
          {countries8.map((d) => <path key={d} d={rough(d, 0.5)} stroke="#38383a" strokeWidth="3" vectorEffect="non-scaling-stroke" />)}
          {regions8.map((d) => <path key={d} d={rough(d, 0.7)} stroke="#2c2c2e" strokeWidth="2" vectorEffect="non-scaling-stroke" />)}
        </g>
        <g transform="translate(2030 830) scale(0.61226 0.57398)">
          {countries9.map((d) => <path key={d} d={rough(d, 0.5)} stroke="#38383a" strokeWidth="3" vectorEffect="non-scaling-stroke" />)}
          {regions9.map((d) => <path key={d} d={rough(d, 0.7)} stroke="#2c2c2e" strokeWidth="2" vectorEffect="non-scaling-stroke" />)}
        </g>
        <g fill="#858587" className="font-[Noto_Sans]">
          {places.map(([t, a, b, y, s]) => <text key={t} x={a} y={y} fontSize={s} textLength={b - a}>{t}</text>)}
        </g>
        <g fill="#66676a" fontSize="21.500" className="font-[Noto_Sans] italic">
          {seas.map(([t, a, b, y]) => <text key={t} x={a} y={y} textLength={b - a}>{t}</text>)}
        </g>
        <g fill="#d7b244" fillOpacity="0.94">
          {bubbles.map(([x, y, r]) => <circle key={x} cx={x} cy={y} r={r} />)}
        </g>
        <g fill="#303030" stroke="#fff" strokeWidth="4" fontSize="21.400" textAnchor="middle" className="font-[Liberation_Sans] font-bold [paint-order:stroke]">
          {pins.map(([t, x, y]) => <text key={t} x={x} y={y}>{t}</text>)}
        </g>
      </svg>
      {/* marked area */}
      <div className="absolute left-[641px] top-[296px] h-[183px] w-[244px] border-5 border-[#ea5cf5]" />
      <div className="absolute right-[16px] top-[12px] flex h-[65px] w-[64px] items-center justify-center bg-[#2f2f2f]">
        <svg viewBox="0 0 30 34" className="h-[32px] w-[30px]" fill="none" stroke="#cfcfcf" strokeWidth="2">
          <path d="M11 4H29M11 12H29M11 20.500H29M11 28.500H29M1.500 2H5.500V6H1.500ZM1.500 18.500H5.500V22.500H1.500ZM3.500 26.500L5.500 30.500H1.500Z" />
          <circle cx="3.500" cy="12" r="2" />
        </svg>
      </div>
      <div className="absolute bottom-[51px] right-[14px] flex h-[115px] w-[61px] flex-col items-center justify-around border-2 border-[#3f3f3f] bg-[#2c2c2c] pb-[3px]">
        <svg viewBox="0 0 26 26" className="size-[26px]" stroke="#b8b8b8" strokeWidth="3.500"><path d="M13 0V26M0 13H26" /></svg>
        <svg viewBox="0 0 26 26" className="size-[26px]" stroke="#b8b8b8" strokeWidth="3.500"><path d="M0 13H26" /></svg>
      </div>
      <div className="absolute bottom-[10px] right-[20px] flex h-[30px] w-[136px] items-center justify-center bg-[#bdbebf] text-[26px] leading-none text-[#333]">
        <Fit w={121}>Esri, HERE</Fit>
      </div>
    </div>
  );
}

/* ---------- regions list ---------- */
const rows: [string, number, string, number, string, string, number][] = [
  ["Lombardia:", 148, "455.479", 111, "68.210", "2.744", 72],
  ["Veneto:", 101, "209.220", 110, "98.014", "4.211", 72],
  ["Piemonte:", 132, "187.890", 109, "41.300", "1.210", 72],
  ["Campania:", 140, "178.728", 109, "84.697", "1.201", 72],
  ["Emilia-Romagna:", 219, "152.204", 109, "62.326", "1.745", 72],
  ["Lazio:", 76, "146.395", 109, "77.159", "1.428", 72],
  ["Toscana:", 113, "114.760", 109, "13.519", "514", 54],
  ["Sicilia:", 82, "82.859", 94, "33.865", "731", 54],
  ["Puglia:", 88, "78.426", 94, "52.834", "1.314", 72],
];

function RegionList() {
  return (
    <div className="h-[621px] overflow-hidden border-2 border-[#333] bg-[#222]">
      <div className="h-[63px] pl-[11px] pt-[13px] text-[24px] font-bold leading-[40px]"><Fit w={449}>Regioni - totale casi, attuali e incremento</Fit></div>
      <div className="flex h-[554px]">
        <div className="w-[668px]">
          {rows.map(([n, nw, v, vw, a, b, bw]) => (
            <div key={n} className="flex h-[60px] items-baseline border-b-2 border-[#5a5a5a] pl-[20px] text-[22px] leading-[57px]">
              <Fit w={nw} className="text-[30px]">{n}</Fit>
              <Fit w={vw} className="ml-[7px] text-[29.500px] font-bold text-[#f03427]">{v}</Fit>
              <Fit w={84} className="ml-[6px]"><b>(</b><span className="text-[#e9a63c]">{a}</span>)</Fit>
              <Fit w={bw} className="ml-[6px]"><b>(</b>{b}<b>)</b></Fit>
            </div>
          ))}
        </div>
        <div className="w-[14px] bg-[#3c3c3c]"><div className="h-[240px] bg-[#5a5a5a]" /></div>
      </div>
    </div>
  );
}

const notes: [string, number][] = [
  ["La Regione Basilicata segnala che il dato delle persone", 600],
  ["testate è stato ricalcolato e verificato con la piattaforma", 602],
  ["regionale covid-19. La Regione Emilia Romagna segnala", 615],
  ["che a seguito di una verifica sui dati comunicati nei giorni", 625],
  ["passati è stato eliminato 1 caso in quanto giudicato non", 607],
  ["caso COVID-19. La Regione FVG segnala che per", 537],
  ["problemi tecnici i dati comunicati oggi sono parziali, i dati", 631],
  ["mancanti saranno riportati nelle comunicazioni successive.", 637],
  ["La Regione Piemonte segnala che il dato della", 522],
];
const links: [string, number][] = [["Schede riepilogo PDF", 223], ["Dati CSV / JSON", 169], ["Shape aree", 115], ["Metadata", 97]];

export default function App() {
  return (
    <div className="h-[2242px] w-[3808px] overflow-hidden bg-white pl-[112px] pt-[75px] font-[Lato,sans-serif] text-white">
      <div className="relative flex h-[2020px] w-[3584px] flex-col overflow-hidden rounded-[22px] bg-black [box-shadow:0_0_0_1px_rgba(0,0,0,0.6),0_34px_72px_rgba(0,0,0,0.69)]">
        <TitleBar />
        <TabBar />
        <div className="flex grow flex-col pl-[20px] pt-[20px]">
          <Header />
          <div className="ml-[14px] mt-[20px] flex gap-[20px]">
            <div className="w-[2824px]">
              <div className="flex h-[477px] gap-[20px]">
                {kpis.map((k) => <KpiCard key={k.title} k={k} />)}
              </div>
              <div className="mt-[24px] flex gap-[20px]">
                <div className="relative w-[942px]">
                  <Chart
                    title="Andamento nazionale" tw={328} top={845} h={583} x0={322} x1={1022} slider={966}
                    axis={[{ y: 981.500, label: "1.500.000" }, { y: 1109, label: "1.000.000" }, { y: 1237, label: "500.000" }, { y: 1365, label: "0" }]}
                    months={[{ x: 409, label: "apr" }, { x: 623, label: "lug" }, { x: 836, label: "ott" }]}
                    transform="translate(100 830) scale(0.65051 0.41454)"
                    series={[
                      { d: orange1, base: "V1290H345Z", color: "#f3ae3d", fill: "rgba(246,160,60,0.12)" },
                      { d: green1, base: "V1290H345Z", color: "#7ce344", fill: "rgba(90,220,70,0.12)" },
                      { d: gray1, base: "V1290H345Z", color: "#bdbdbd", fill: "rgba(200,200,200,0.12)" },
                    ]}
                  />
                  <div className="h-[20px]" />
                  <Chart
                    title="Nuovi positivi" tw={179} top={1448} h={568} x0={292} x1={1022} slider={1570}
                    axis={[{ y: 1585, label: "50.000" }, { y: 1659, label: "40.000" }, { y: 1733, label: "30.000" }, { y: 1807, label: "20.000" }, { y: 1881, label: "10.000" }, { y: 1955, label: "0" }]}
                    months={[{ x: 383, label: "apr" }, { x: 605, label: "lug" }, { x: 830.500, label: "ott" }]}
                    transform="translate(100 1400) scale(0.65051 0.47832)"
                    series={[{ d: orange2, base: "V1160H300Z", color: "#f6ad3d", fill: "rgba(246,173,61,0.12)" }]}
                  />
                  <Tabs items={[{ label: "Positivi", text: 75, box: "w-[125px]" }, { label: "Variazione", text: 114, box: "w-[163px]" }]} />
                  <div className="absolute -right-[16px] top-[593px] flex size-[36px] items-center justify-center rounded-full border-2 border-[#8b8b8b] bg-[#222]">
                    <svg viewBox="0 0 20 20" className="size-[20px]" fill="none" stroke="#b5b5b5" strokeWidth="1.600">
                      <path d="M1 6V1H6M1 1L7 7M14 1H19V6M19 1L13 7M1 14V19H6M1 19L7 13M19 14V19H14M19 19L13 13" />
                    </svg>
                  </div>
                  {/* collapsed side drawer handle */}
                  <div className="absolute -left-[34px] top-[164px] flex h-[400px] w-[28px] items-center border-2 border-l-0 border-[#333] bg-[#222]">
                    <svg viewBox="0 0 16 28" className="mt-[-3px] ml-[5px] h-[28px] w-[16px]" fill="none" stroke="#4694ea" strokeWidth="2"><path d="M2 2V26L14 14Z" /></svg>
                  </div>
                </div>
                <div className="w-[1862px]">
                  <ItalyMap />
                  <Tabs items={[{ label: "Regioni - attuali positivi", text: 254, box: "w-[304px]" }, { label: "Province - casi totali", text: 215, box: "w-[265px]" }]} />
                  <div className="mt-[24px] flex h-[281px] gap-[20px]">
                    <div className="w-[343px] border-2 border-[#333] bg-[#222] pl-[20px] pt-[11px]">
                      <div className="flex">
                        <Emblem />
                        <div className="ml-[10px] mt-[3px] h-[90px] w-[2px] bg-[#111]" />
                        <CivilProtection className="ml-[10px] h-[98px] w-[114px]" />
                      </div>
                      <div className="mt-[5px] h-[26px] pl-[2px] font-[Liberation_Serif] text-[22.500px] leading-[26px]"><Fit w={219}>PROTEZIONE CIVILE</Fit></div>
                      <div className="mt-[2px] pl-[2px] text-[16px] leading-[19px] text-[#ddd]">
                        <div className="h-[19px]"><Fit w={216}>Presidenza del Consiglio dei Ministri</Fit></div>
                        <div className="h-[19px]"><Fit w={216}>Dipartimento della Protezione Civile</Fit></div>
                      </div>
                    </div>
                    <div className="relative flex w-[1499px] border-2 border-[#333] bg-[#222] pl-[10px] pt-[11px] text-[24px] leading-[34px]">
                      <div className="w-[1034px]">
                        <div><Fit w={379}><b>Licenza:</b> <span className="text-[#4694ea]">CC-BY-4.0</span> - <span className="text-[#4694ea]">Visualizza licenza</span></Fit></div>
                        <div className="font-bold"><Fit w={350}>Scheda metadati RNDT: <span className="text-[#4694ea]">dati</span> - <span className="text-[#4694ea]">aree</span></Fit></div>
                        <div><Fit w={720}><b>Temi del dataset:</b> <span className="text-[#4694ea]">Salute umana e sicurezza</span> (Inspire) - <b>ISO 19115:</b> Salute</Fit></div>
                        <div className="italic"><Fit w={362}>Dati forniti dal Ministero della Salute</Fit></div>
                        <div className="italic"><Fit w={750}>Elaborazione e gestione dati a cura del Dipartimento della Protezione Civile</Fit></div>
                      </div>
                      <div className="font-bold">
                        <div><Fit w={277}>Download schede e dati:</Fit></div>
                        {links.map(([t, w]) => (
                          <div key={t} className="flex"><span className="w-[12px]">-</span><Fit w={w} className="text-[#4694ea]">{t}</Fit></div>
                        ))}
                      </div>
                      <div className="absolute -left-[8px] -top-[1px] h-[208px] w-[1349px] border-5 border-[#ea5cf5]" />
                    </div>
                  </div>
                </div>
              </div>
            </div>
            <div className="w-[686px]">
              <div className="h-[614px] border-2 border-[#333] bg-[#1a1a1a] pl-[10px] pt-[9px] text-[27px] font-bold leading-[34px] text-[#f0f0f0]">
                <div className="font-semibold text-[#d62b20]"><Fit w={305}>Altri dati e informazioni</Fit></div>
                <div className="mt-[34px]"><Fit w={380}>- Aggiornamento dati sanitari</Fit></div>
                <div className="pl-[14px]"><Fit w={109}>[storico]</Fit></div>
                <div className="mt-[34px]"><Fit w={413}>- Infografica epidemiologica ISS</Fit></div>
                <div className="mt-[34px]"><Fit w={449}>- Sorveglianza settimanale Regioni</Fit></div>
                <div className="mt-[34px]"><Fit w={402}>- Aggiornamento nazionale ISS</Fit></div>
              </div>
              <div className="h-[20px]" />
              <RegionList />
              <Tabs items={[{ label: "Regioni", text: 84, box: "w-[134px]" }, { label: "Province", text: 95, box: "w-[143px]" }]} />
              <div className="relative mt-[24px] h-[397px] overflow-hidden border-2 border-[#333] bg-[#222]">
                <div className="pl-[10px] pt-[12px] text-[28px] font-bold leading-[38px] text-[#ea3323]"><Fit w={65}>Note</Fit></div>
                <div className="mt-[13px] flex h-[332px] overflow-hidden">
                  <div className="w-[668px] pl-[20px] pt-[10px] text-[25px] leading-[34px]">
                    <div className="h-[34px] font-bold"><Fit w={136}>18/12/2020</Fit></div>
                    {notes.map(([t, w]) => <div key={t} className="h-[34px]"><Fit w={w}>{t}</Fit></div>)}
                  </div>
                  <div className="w-[14px] bg-[#3c3c3c]"><div className="h-[31px] bg-[#5a5a5a]" /></div>
                </div>
                <div className="absolute left-[7px] top-[58px] h-[323px] w-[654px] border-5 border-[#ea5cf5]" />
              </div>
            </div>
          </div>
        </div>
        <div className="pointer-events-none absolute inset-0 rounded-[22px] border-2 border-white/25 border-t-white/40" />
      </div>
    </div>
  );
}
